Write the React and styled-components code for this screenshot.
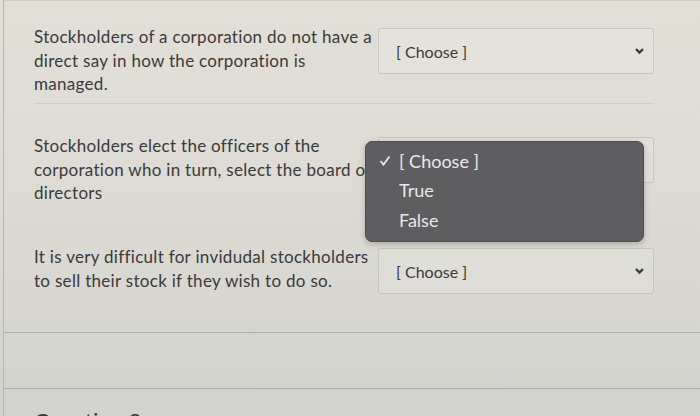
import React from "react";
import styled, { createGlobalStyle } from "styled-components";

const GlobalStyle = createGlobalStyle`
  html, body {
    margin: 0;
    padding: 0;
  }
  body {
    width: 700px;
    height: 416px;
    overflow: hidden;
    font-family: Lato, "Liberation Sans", sans-serif;
    background: linear-gradient(180deg, #e2dfd7 0%, #dddbd3 45%, #d2d2ce 100%);
  }
`;

const questions = [
  {
    text: "Stockholders of a corporation do not have a direct say in how the corporation is managed.",
    open: false,
  },
  {
    text: "Stockholders elect the officers of the corporation who in turn, select the board of directors",
    open: true,
  },
  {
    text: "It is very difficult for invidudal stockholders to sell their stock if they wish to do so.",
    open: false,
  },
];

const rowSpec = [
  { h: 78, mb: 30, mt: 3, line: true },
  { h: 80, mb: 30, mt: 3, line: false },
  { h: 60, mb: 0, mt: 3, line: false },
];

const Page = styled.div`
  position: relative;
  height: 416px;
  border-left: 1px solid #b9b7b0;
  margin-left: 3px;
  border-top: 1px solid #cfccc4;
`;

const List = styled.div`
  padding: 24px 46px 0 30px;
  display: flex;
  flex-direction: column;
`;

const Row = styled.div`
  display: flex;
  align-items: flex-start;
  justify-content: space-between;
  height: ${(p) => p.$h}px;
  border-bottom: 1px solid ${(p) => (p.$line ? "rgba(150,148,140,0.22)" : "transparent")};
  margin-bottom: ${(p) => p.$mb}px;
`;

const Prompt = styled.div`
  width: 343px;
  font-size: 17px;
  line-height: 23.5px;
  color: #3b3a3b;
  letter-spacing: 0.3px;
`;

const SelectWrap = styled.div`
  position: relative;
  margin-top: ${(p) => p.$mt}px;
`;

const SelectBox = styled.div`
  width: 276px;
  height: 46px;
  box-sizing: border-box;
  border: 1px solid rgba(160,158,150,0.4);
  border-radius: 3px;
  background: rgba(236,234,228,0.3);
  display: flex;
  align-items: center;
  justify-content: space-between;
  padding: 0 8px 0 17px;
  font-size: 16px;
  color: #3b3a3b;
`;

const Menu = styled.div`
  position: absolute;
  left: -13px;
  top: 4px;
  width: 279px;
  height: 101px;
  box-sizing: border-box;
  background: #5e5d60;
  border-radius: 7px;
  border: 1px solid #4e4d50;
  box-shadow: 0 2px 6px rgba(0,0,0,0.22);
  padding: 4px 0 0 0;
  display: flex;
  flex-direction: column;
  z-index: 2;
`;

const MenuItem = styled.div`
  height: 29.5px;
  display: flex;
  align-items: center;
  font-size: 18px;
  color: #e9e8ea;
  padding-left: 13px;
`;

const Check = styled.span`
  width: 20px;
  display: inline-flex;
  align-items: center;
`;

const Footer = styled.div`
  position: absolute;
  left: 0;
  right: 0;
  top: ${(p) => p.$top}px;
  border-top: 1px solid rgba(120,120,118,0.45);
`;

const NextTitle = styled.div`
  position: absolute;
  left: 30px;
  top: 406px;
  font-size: 22px;
  color: #3b3a3b;
`;

const Chevron = () => (
  <svg width="11" height="8" viewBox="0 0 11 8">
    <path d="M2 2 L5.5 5.5 L9 2" fill="none" stroke="#3b3a3b" strokeWidth="2.4" />
  </svg>
);

const Tick = () => (
  <svg width="12" height="11" viewBox="0 0 12 11">
    <path d="M1.5 6 L4.5 9.5 L10.5 1.5" fill="none" stroke="#e9e8ea" strokeWidth="1.8" />
  </svg>
);

export default function App() {
  return (
    <>
      <GlobalStyle />
      <Page>
        <List>
          {questions.map((q, i) => (
            <Row key={i} $h={rowSpec[i].h} $mb={rowSpec[i].mb} $line={rowSpec[i].line}>
              <Prompt>{q.text}</Prompt>
              <SelectWrap $mt={rowSpec[i].mt}>
                <SelectBox>
                  <span>[ Choose ]</span>
                  <Chevron />
                </SelectBox>
                {q.open && (
                  <Menu>
                    <MenuItem>
                      <Check><Tick /></Check>[ Choose ]
                    </MenuItem>
                    <MenuItem>
                      <Check />True
                    </MenuItem>
                    <MenuItem>
                      <Check />False
                    </MenuItem>
                  </Menu>
                )}
              </SelectWrap>
            </Row>
          ))}
        </List>
        <Footer $top={331} />
        <Footer $top={387} />
        <NextTitle>Question 9</NextTitle>
      </Page>
    </>
  );
}
